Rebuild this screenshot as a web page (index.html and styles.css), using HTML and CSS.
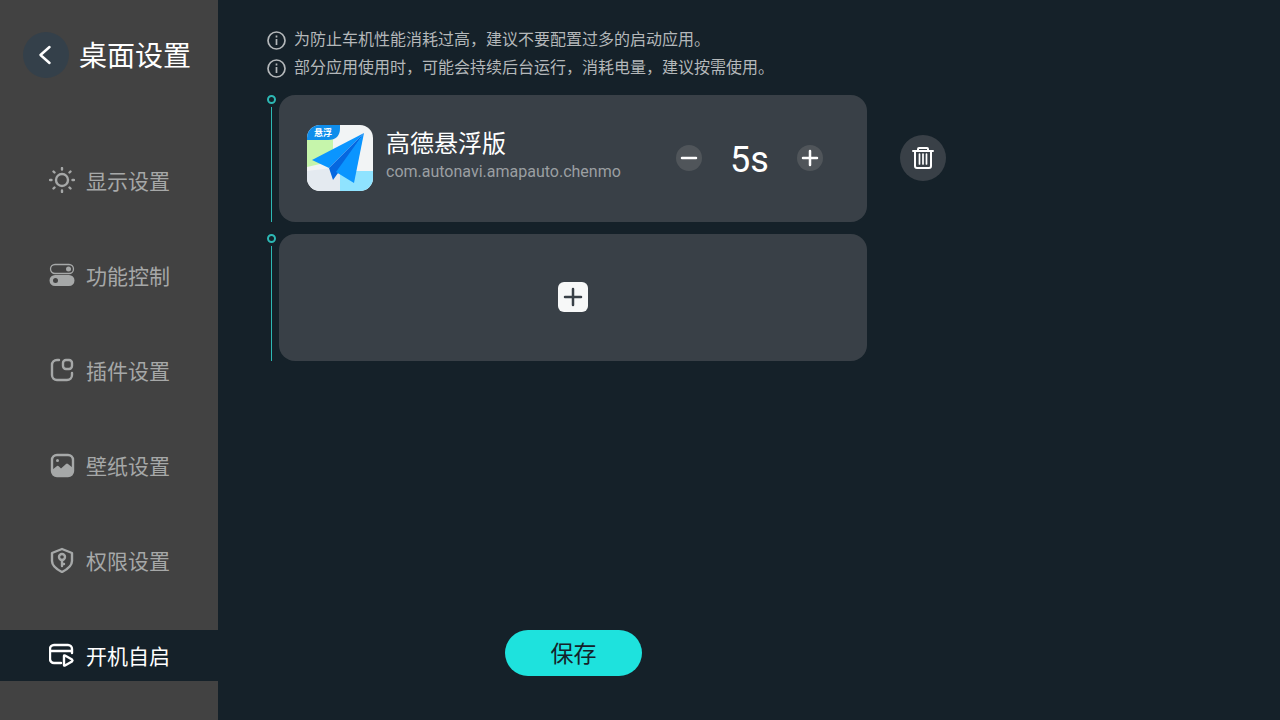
FILE: index.html
```html
<!DOCTYPE html>
<html lang="zh-CN">
  <head>
    <meta charset="utf-8">
    <meta name="viewport" content="width=device-width, initial-scale=1">
    <title>桌面设置</title>
    <link rel="stylesheet" href="styles.css">
  </head>
  <body>
    <aside class="sidebar">
      <header class="sidebar-head">
        <button class="back" type="button" aria-label="返回">
          <svg width="24" height="24" viewBox="0 0 24 24"><path d="M15.500 4 L6.500 12 L15.500 20"/></svg>
        </button>
        <h1>桌面设置</h1>
      </header>
      <nav class="menu">
        <a href="#display">
          <svg class="icon" viewBox="0 0 26 26">
            <circle cx="13" cy="13" r="6"/>
            <path d="M13 1v1.500M13 23.500v1.500M1 13h1.500M23.500 13h1.500M4.500 4.500l1 1M20.500 20.500l1 1M4.500 21.500l1-1M20.500 5.500l1-1"/>
          </svg>
          显示设置
        </a>
        <a href="#function">
          <svg class="icon" viewBox="0 0 26 26">
            <rect class="thin" x="1.500" y="2.500" width="23" height="9" rx="4.500"/>
            <circle class="fill" cx="19.500" cy="7" r="2.500"/>
            <path class="fill" fill-rule="evenodd" d="M6 13h14a5 5 0 0 1 0 11H6a5 5 0 0 1 0-11zM6.500 16a2.500 2.500 0 1 0 0 5a2.500 2.500 0 0 0 0-5z"/>
          </svg>
          功能控制
        </a>
        <a href="#plugin">
          <svg class="icon" viewBox="0 0 26 26">
            <path d="M10 3H8a5 5 0 0 0-5 5v10a5 5 0 0 0 5 5h10a5 5 0 0 0 5-5v-2"/>
            <rect x="14" y="3" width="9" height="9" rx="3"/>
          </svg>
          插件设置
        </a>
        <a href="#wallpaper">
          <svg class="icon" viewBox="0 0 26 26">
            <rect x="3" y="3" width="21" height="21" rx="5"/>
            <circle class="fill" cx="8.500" cy="8.500" r="1.500"/>
            <path class="fill" d="M3 18l5-4q1-.5 2 .5l2 2 5-4.500q1-1 2 0l5 4v4q0 4-5 4H8q-5 0-5-5z"/>
          </svg>
          壁纸设置
        </a>
        <a href="#permission">
          <svg class="icon" viewBox="0 0 26 26">
            <path d="M13 2l10 4v8c0 5-4 8-10 11C7 22 3 19 3 14V6z"/>
            <circle cx="13" cy="10" r="3"/>
            <path d="M13 13v6M13 17h2"/>
          </svg>
          权限设置
        </a>
        <a class="active" href="#autostart">
          <svg class="icon" viewBox="0 0 26 26">
            <path d="M12 21H5a4 4 0 0 1-4-4V7a4 4 0 0 1 4-4h14a4 4 0 0 1 4 4v4M1 9h22"/>
            <path d="M15 14v9q0 1 1 .5l7-4q1-1 0-2l-7-4q-1-.5-1 .5z"/>
          </svg>
          开机自启
        </a>
      </nav>
    </aside>

    <main class="content">
      <ul class="notes">
        <li>
          <svg width="19" height="19" viewBox="0 0 19 19"><circle cx="9.500" cy="9.500" r="8.500"/><path d="M9.500 8v6M9.500 4.500v2"/></svg>
          为防止车机性能消耗过高，建议不要配置过多的启动应用。
        </li>
        <li>
          <svg width="19" height="19" viewBox="0 0 19 19"><circle cx="9.500" cy="9.500" r="8.500"/><path d="M9.500 8v6M9.500 4.500v2"/></svg>
          部分应用使用时，可能会持续后台运行，消耗电量，建议按需使用。
        </li>
      </ul>

      <section class="list">
        <div class="row">
          <span class="rail"></span>
          <article class="card">
            <svg class="app-icon" width="66" height="66" viewBox="0 0 66 66">
              <clipPath id="appClip"><rect width="66" height="66" rx="13"/></clipPath>
              <g clip-path="url(#appClip)">
                <rect width="66" height="66" fill="#f2f4f5"/>
                <path d="M0 12h26v24L0 42z" fill="#c6f5ab"/>
                <path d="M0 46l33-4v24H0z" fill="#e4eaf0"/>
                <path d="M33 46h33v20H33z" fill="#8fe3ff"/>
                <path d="M0 0h33v3q0 12-12 12H0z" fill="#0f8deb"/>
                <path d="M57 8L5 35l17 8z" fill="#0a95ff"/>
                <path d="M57 8L22 43l4 12 5-7z" fill="#0568e0"/>
                <path d="M57 8L29 47l18 11z" fill="#0a95ff"/>
                <text class="app-tag" x="7" y="11">悬浮</text>
              </g>
            </svg>
            <div class="app-info">
              <h2>高德悬浮版</h2>
              <p>com.autonavi.amapauto.chenmo</p>
            </div>
            <div class="stepper">
              <button type="button" aria-label="减少" onclick="step(-1)">
                <svg width="26" height="26" viewBox="0 0 26 26"><path d="M6 13h14"/></svg>
              </button>
              <output id="delay">5s</output>
              <button type="button" aria-label="增加" onclick="step(1)">
                <svg width="26" height="26" viewBox="0 0 26 26"><path d="M6 13h14M13 6v14"/></svg>
              </button>
            </div>
          </article>
          <button class="delete" type="button" aria-label="删除">
            <svg width="24" height="24" viewBox="0 0 24 24">
              <path d="M2 5h20M7 4.500V3q0-1 1-1h8q1 0 1 1v1.500M4 6v14q0 2 2 2h12q2 0 2-2V6"/>
              <path class="bars" d="M8.500 8v10M12 8v10M15.500 8v10"/>
            </svg>
          </button>
        </div>
        <div class="row">
          <span class="rail"></span>
          <article class="card empty">
            <button class="add" type="button" aria-label="添加应用">
              <svg width="30" height="30" viewBox="0 0 30 30"><path d="M7 15h16M15 7v16"/></svg>
            </button>
          </article>
        </div>
      </section>

      <button class="save" type="button">保存</button>
    </main>

    <script>
function step(n) {
  var delay = document.getElementById("delay");
  var value = parseInt(delay.value) + n;
  if (value < 0) {
    return;
  }
  delay.value = value + "s";
}
    </script>
  </body>
</html>
```
FILE: styles.css
```css
* {
  box-sizing: border-box;
  margin: 0;
  padding: 0;
}
body {
  display: flex;
  min-height: 100vh;
  background-color: #152129;
  color: #fff;
  font-family: Roboto, "Noto Sans CJK SC", sans-serif;
}
button {
  border: 0;
  color: inherit;
  font-family: inherit;
  cursor: pointer;
}
svg {
  display: block;
  flex-shrink: 0;
  fill: none;
  stroke: currentColor;
  stroke-width: 2;
  stroke-linecap: round;
  stroke-linejoin: round;
}

/* sidebar */
.sidebar {
  flex: 0 0 218px;
  background-color: #424242;
}
.sidebar-head {
  display: flex;
  align-items: center;
  gap: 10px;
  padding: 30px 0 0 23px;
}
.sidebar-head h1 {
  padding-top: 4px;
  font-size: 28px;
  font-weight: 400;
  line-height: 46px;
  white-space: nowrap;
}
.back {
  display: flex;
  align-items: center;
  justify-content: center;
  width: 46px;
  height: 46px;
  border-radius: 50%;
  background-color: #34404a;
}
.back svg {
  stroke-width: 2.5;
}
.menu {
  display: flex;
  flex-direction: column;
  gap: 44px;
  padding-top: 75px;
}
.menu a {
  display: flex;
  align-items: center;
  gap: 11px;
  height: 51px;
  padding: 0 0 2px 49px;
  color: #a6a8a8;
  font-size: 21px;
  text-decoration: none;
}
.menu .active {
  background-color: #152129;
  color: #fff;
}
.icon {
  width: 26px;
  height: 26px;
  stroke-width: 2.4;
}
.icon .thin {
  stroke-width: 1.3;
}
.icon .fill {
  fill: currentColor;
  stroke: none;
}

/* content */
.content {
  display: flex;
  flex: 1;
  flex-direction: column;
  padding: 26px 49px 44px;
}
.notes {
  color: #b4b8ba;
  font-size: 16px;
  list-style: none;
}
.notes li {
  display: flex;
  align-items: center;
  gap: 8px;
  line-height: 28px;
}
.notes svg {
  stroke-width: 1.7;
  stroke-linecap: butt;
}
.list {
  display: flex;
  flex-direction: column;
  gap: 12px;
  padding: 13px 0 24px;
}
.row {
  display: flex;
  align-items: center;
}
.rail {
  display: flex;
  flex-direction: column;
  align-items: center;
  align-self: stretch;
  gap: 3px;
  width: 9px;
  margin-right: 3px;
}
.rail::before {
  content: "";
  width: 5px;
  height: 5px;
  border: 2px solid #2db8b4;
  border-radius: 50%;
}
.rail::after {
  content: "";
  flex: 1;
  width: 1px;
  background-color: #2db8b4;
}
.card {
  display: flex;
  flex: 0 1 588px;
  align-items: center;
  min-height: 127px;
  padding: 0 44px 2px 28px;
  border-radius: 16px;
  background-color: #394047;
}
.card.empty {
  justify-content: center;
  padding: 0 0 2px;
}
.app-icon {
  stroke: none;
}
.app-tag {
  fill: #fff;
  font-size: 9px;
  font-weight: 700;
}
.app-info {
  margin-left: 13px;
  padding-bottom: 3px;
}
.app-info h2 {
  font-size: 24px;
  font-weight: 400;
  line-height: 32px;
}
.app-info p {
  color: #9b9fa2;
  font-size: 16px;
  line-height: 24px;
}
.stepper {
  display: flex;
  align-items: center;
  justify-content: space-between;
  width: 147px;
  margin-left: auto;
}
.stepper button {
  width: 26px;
  height: 26px;
  border-radius: 50%;
  background-color: #50555a;
}
.stepper svg,
.add svg {
  stroke-width: 2.5;
}
.stepper output {
  padding-top: 5px;
  font-size: 36px;
  line-height: 42px;
}
.delete {
  display: flex;
  align-items: center;
  justify-content: center;
  width: 46px;
  height: 46px;
  margin: 0 0 2px 33px;
  border-radius: 50%;
  background-color: #394047;
}
.delete .bars {
  stroke-width: 1.7;
}
.add {
  width: 30px;
  height: 30px;
  border-radius: 6px;
  background-color: #f7f8f8;
  color: #394047;
}
.save {
  width: 137px;
  height: 46px;
  margin: auto 0 0 238px;
  padding-bottom: 2px;
  border-radius: 23px;
  background-color: #1ee2dd;
  color: #152129;
  font-size: 23px;
}
```
